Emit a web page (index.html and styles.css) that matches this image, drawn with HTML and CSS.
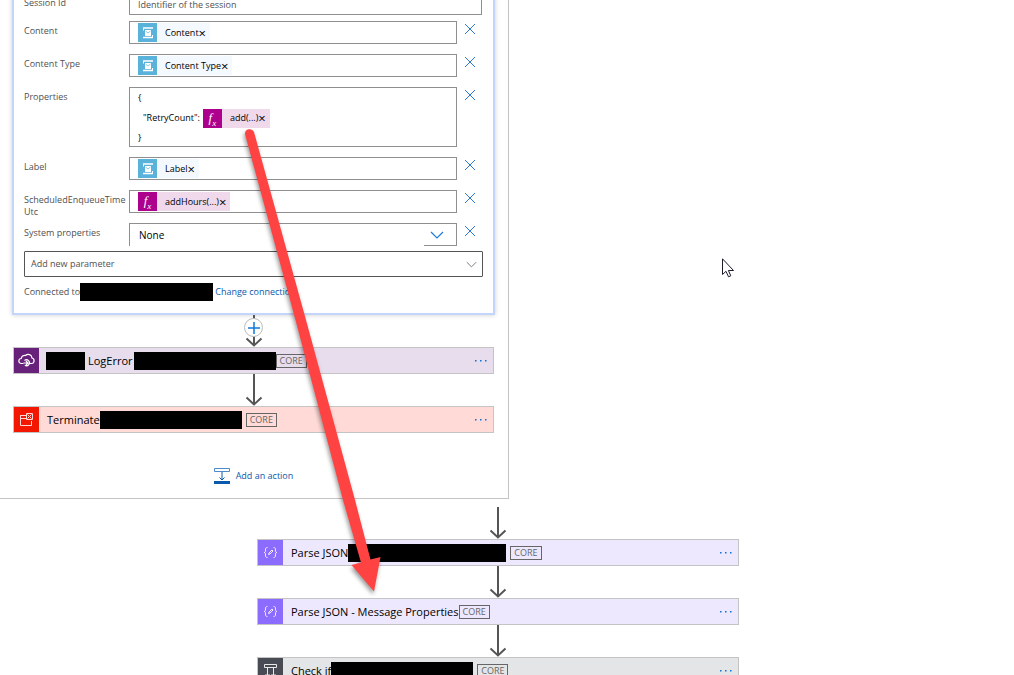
FILE: index.html
```html
<!DOCTYPE html>
<html lang="en">
<head>
    <meta charset="UTF-8">
    <meta name="viewport" content="width=device-width, initial-scale=1.0">
    <title>Logic App Designer</title>
    <link rel="stylesheet" href="styles.css">
</head>
<body>
    <!-- Shared icons -->
    <svg class="sprite" aria-hidden="true">
        <symbol id="icon-bus" viewBox="0 0 19 19">
            <path d="M5 5h10M5 14.500h10" fill="none" stroke="#fff" stroke-width="1.500"/>
            <path d="M5.500 5v2.500M14.500 14.500v-2.500" fill="none" stroke="#fff"/>
            <path d="M7 7h6v6h-6z" fill="#fff"/>
            <path d="M7.500 8l2.500 2 2.500-2" fill="none" stroke="#59b2d9" stroke-width=".7"/>
        </symbol>
        <symbol id="icon-close" viewBox="0 0 12 12">
            <path d="M1 1l10 10M11 1L1 11" fill="none" stroke="#2f78d0" stroke-width="1"/>
        </symbol>
        <symbol id="icon-chevron" viewBox="0 0 14 8">
            <path d="M1 1l6 6 6-6" fill="none" stroke="currentColor" stroke-width="1.200"/>
        </symbol>
        <symbol id="icon-arrow" viewBox="0 0 18 32">
            <path d="M9 0v30" fill="none" stroke="#555" stroke-width="2"/>
            <path d="M1.500 23.500l7.500 7 7.500-7" fill="none" stroke="#555" stroke-width="2"/>
        </symbol>
        <symbol id="icon-dots" viewBox="0 0 14 4">
            <path d="M1 1h1.500v1.500h-1.500zM6 1h1.500v1.500h-1.500zM11 1h1.500v1.500h-1.500z" fill="#0f6fd0"/>
        </symbol>
        <symbol id="icon-json" viewBox="0 0 25 25">
            <g fill="none" stroke="#f0eaff" stroke-width="1">
                <path d="M9.500 7.500c-2 0-2 .8-2 2.500s0 2.500-1.500 2.500c1.500 0 1.500.8 1.500 2.500s0 2.500 2 2.500M15.500 7.500c2 0 2 .8 2 2.500s0 2.500 1.500 2.500c-1.500 0-1.500.8-1.500 2.500s0 2.500-2 2.500"/>
                <path d="M10.500 14.500l.5-1.500 3-3 1 1-3 3z"/>
            </g>
        </symbol>
    </svg>

    <main class="canvas">
        <!-- Scope -->
        <section class="scope">
            <form class="panel">
                <div class="row">
                    <label class="row-label" for="session">Session Id</label>
                    <input class="field field-wide" id="session" type="text" value="Identifier of the session">
                </div>
                <div class="row">
                    <span class="row-label" id="lbl-content">Content</span>
                    <div class="field" role="textbox" aria-labelledby="lbl-content">
                        <span class="token"><svg class="token-icon"><use href="#icon-bus"/></svg>Content<button type="button" class="token-remove" aria-label="Remove Content">×</button></span>
                    </div>
                    <button type="button" class="row-remove" aria-label="Delete"><svg><use href="#icon-close"/></svg></button>
                </div>
                <div class="row">
                    <span class="row-label" id="lbl-type">Content Type</span>
                    <div class="field" role="textbox" aria-labelledby="lbl-type">
                        <span class="token"><svg class="token-icon"><use href="#icon-bus"/></svg>Content Type<button type="button" class="token-remove" aria-label="Remove Content Type">×</button></span>
                    </div>
                    <button type="button" class="row-remove" aria-label="Delete"><svg><use href="#icon-close"/></svg></button>
                </div>
                <div class="row">
                    <span class="row-label" id="lbl-props">Properties</span>
                    <div class="field field-code" role="textbox" aria-labelledby="lbl-props">
                        <div class="code-line">{</div>
                        <div class="code-line code-indent">"RetryCount":
                            <span class="token token-fx"><span class="token-icon fx">f<sub>x</sub></span>add(...)<button type="button" class="token-remove" aria-label="Remove add">×</button></span>
                        </div>
                        <div class="code-line">}</div>
                    </div>
                    <button type="button" class="row-remove" aria-label="Delete"><svg><use href="#icon-close"/></svg></button>
                </div>
                <div class="row">
                    <span class="row-label" id="lbl-label">Label</span>
                    <div class="field" role="textbox" aria-labelledby="lbl-label">
                        <span class="token"><svg class="token-icon"><use href="#icon-bus"/></svg>Label<button type="button" class="token-remove" aria-label="Remove Label">×</button></span>
                    </div>
                    <button type="button" class="row-remove" aria-label="Delete"><svg><use href="#icon-close"/></svg></button>
                </div>
                <div class="row">
                    <span class="row-label" id="lbl-time">ScheduledEnqueueTime<br>Utc</span>
                    <div class="field" role="textbox" aria-labelledby="lbl-time">
                        <span class="token token-fx"><span class="token-icon fx">f<sub>x</sub></span>addHours(...)<button type="button" class="token-remove" aria-label="Remove addHours">×</button></span>
                    </div>
                    <button type="button" class="row-remove" aria-label="Delete"><svg><use href="#icon-close"/></svg></button>
                </div>
                <div class="row">
                    <label class="row-label" for="system">System properties</label>
                    <div class="select-box">
                        <select class="select" id="system"><option>None</option></select>
                        <span class="select-arrow"><svg><use href="#icon-chevron"/></svg></span>
                    </div>
                    <button type="button" class="row-remove" aria-label="Delete"><svg><use href="#icon-close"/></svg></button>
                </div>
                <div class="add-parameter">
                    <select aria-label="Add new parameter"><option>Add new parameter</option></select>
                    <svg><use href="#icon-chevron"/></svg>
                </div>
                <div class="connection">
                    <span>Connected to</span><span class="redacted redacted-m"></span><a href="#">Change connection.</a>
                </div>
            </form>

            <div class="connector">
                <svg class="arrow"><use href="#icon-arrow"/></svg>
                <button type="button" class="insert" aria-label="Insert a new step">
                    <svg viewBox="0 0 12 12"><path d="M6 0v12M0 6h12" stroke="#0f7ad8" stroke-width="1.500"/></svg>
                </button>
            </div>

            <article class="card card-connector">
                <span class="card-icon">
                    <svg viewBox="0 0 25 25" fill="none" stroke="#fff" stroke-width="1.200">
                        <path d="M9.500 15.500H7.500a2.500 2.500 0 0 1-.3-5 3.500 3.500 0 0 1 4.300-3 3.800 3.800 0 0 1 6.500 2.500 2.800 2.800 0 0 1-.5 5.500h-1.500"/>
                        <path d="M10.500 12.500a3 3 0 1 1 .3 4.800M9.500 15h4M12 13l2 2-2 2"/>
                    </svg>
                </span>
                <span class="redacted redacted-s"></span>
                <span class="card-title">LogError</span>
                <span class="redacted redacted-l"></span>
                <span class="tag">CORE</span>
                <button type="button" class="menu" aria-label="More"><svg><use href="#icon-dots"/></svg></button>
            </article>

            <div class="connector"><svg class="arrow"><use href="#icon-arrow"/></svg></div>

            <article class="card card-terminate">
                <span class="card-icon">
                    <svg viewBox="0 0 25 25" fill="none" stroke="#ffd9d5" stroke-width="1">
                        <path d="M12 8.500H6M6.500 8v10.500h11v-4.500M6.500 11.500h5.500"/>
                        <path d="M12.500 6.500h6v6h-6zM13.500 7.500l4 4M17.500 7.500l-4 4"/>
                    </svg>
                </span>
                <span class="card-title">Terminate</span>
                <span class="redacted redacted-l"></span>
                <span class="tag tag-spaced">CORE</span>
                <button type="button" class="menu" aria-label="More"><svg><use href="#icon-dots"/></svg></button>
            </article>

            <button type="button" class="add-action">
                <svg viewBox="0 0 16 16" fill="none" stroke="#0b59ac">
                    <path d="M.5.500h15v3h-15z" stroke="#4a8bc8"/>
                    <path d="M8 4v8M5.500 9.500L8 12l2.500-2.500"/>
                    <path d="M0 14.500h16" stroke-width="3"/>
                </svg>
                Add an action
            </button>
        </section>

        <!-- Main flow -->
        <section class="flow">
            <div class="connector"><svg class="arrow"><use href="#icon-arrow"/></svg></div>
            <article class="card card-data">
                <span class="card-icon"><svg><use href="#icon-json"/></svg></span>
                <span class="card-title">Parse JSON</span>
                <span class="redacted redacted-xl"></span>
                <span class="tag tag-spaced">CORE</span>
                <button type="button" class="menu" aria-label="More"><svg><use href="#icon-dots"/></svg></button>
            </article>
            <div class="connector"><svg class="arrow"><use href="#icon-arrow"/></svg></div>
            <article class="card card-data">
                <span class="card-icon"><svg><use href="#icon-json"/></svg></span>
                <span class="card-title">Parse JSON - Message Properties</span>
                <span class="tag">CORE</span>
                <button type="button" class="menu" aria-label="More"><svg><use href="#icon-dots"/></svg></button>
            </article>
            <div class="connector"><svg class="arrow"><use href="#icon-arrow"/></svg></div>
            <article class="card card-control">
                <span class="card-icon">
                    <svg viewBox="0 0 25 25" fill="none" stroke="#e8e8ea" stroke-width="1">
                        <path d="M6.500 6.500h12v3h-12zM9.500 10v8M15.500 10v8M7.500 16l2 2 2-2M13.500 16l2 2 2-2"/>
                    </svg>
                </span>
                <span class="card-title">Check if</span>
                <span class="redacted redacted-l"></span>
                <span class="tag tag-spaced">CORE</span>
                <button type="button" class="menu" aria-label="More"><svg><use href="#icon-dots"/></svg></button>
            </article>
        </section>

        <!-- Annotation arrow and pointer -->
        <svg class="annotation" viewBox="0 0 150 475" aria-hidden="true">
            <path d="M5 10A4.700 4.700 0 0 1 14 8L66 196 115 376 130.500 435.500 140.500 433 134 467.500 111.500 441 121 438.500 103 376 55.500 196Z" fill="#ff4343"/>
        </svg>
        <svg class="pointer" viewBox="0 0 13 20" aria-hidden="true">
            <path d="M.5.800v15.700l3.500-3.200 2.500 5.500 2.300-1-2.400-5.300h5.100z" fill="#fff" stroke="#1c1c2c"/>
        </svg>
    </main>
</body>
</html>
```
FILE: styles.css
```css
:root {
    --text: #000000;
    --text-label: #505050;
    --link: #0b59ac;
    --line: #8f8f8f;
    --line-light: #c4c4c4;
    --panel-border: #c3d5fb;
}

* {
    margin: 0;
    padding: 0;
    box-sizing: border-box;
}

body {
    font-family: 'Open Sans', 'Noto Sans', sans-serif;
    font-size: 9px;
    line-height: 12px;
    color: var(--text);
    background-color: #ffffff;
}

button, input, select {
    font: inherit;
    color: inherit;
    background: none;
    border: none;
}

button {
    cursor: pointer;
}

svg {
    display: block;
}

.sprite {
    position: absolute;
    width: 0;
    height: 0;
}

.canvas {
    position: relative;
    height: 100vh;
    overflow: hidden;
}

/* Scope */
.scope {
    max-width: 509px;
    margin-top: -20px;
    padding: 0 13px 13px 12px;
    border-right: 1px solid var(--line-light);
    border-bottom: 1px solid var(--line-light);
}

.panel {
    display: flex;
    flex-direction: column;
    gap: 10px;
    padding: 11px 10px 12px;
    border: 2px solid var(--panel-border);
    box-shadow: 0 0 5px rgba(0, 0, 0, 0.2);
}

.row {
    display: grid;
    grid-template-columns: 105px 1fr 26px;
    grid-template-rows: minmax(22px, auto);
    align-items: start;
}

.row:first-child {
    margin-bottom: -4px;
}

.row-label {
    /* a second line may hang into the gap below */
    margin-bottom: -5px;
    padding-top: 4px;
    color: var(--text-label);
}

.field {
    display: flex;
    align-items: center;
    height: 23px;
    padding-left: 8px;
    border: 1px solid var(--line);
}

.field-wide {
    grid-column: 2 / 4;
    height: 22px;
    margin-right: 1px;
    color: var(--text-label);
}

.field-code {
    display: block;
    height: 60px;
}

.code-line {
    display: flex;
    align-items: center;
    height: 20px;
}

.code-indent {
    gap: 3px;
    padding-left: 5px;
}

.token {
    display: inline-flex;
    align-items: center;
    height: 19px;
    padding-right: 4px;
    background-color: #f4f8ff;
}

.token-icon {
    width: 19px;
    height: 19px;
    margin-right: 8px;
    background-color: #59b2d9;
}

.token-fx {
    background-color: #f1d9ec;
}

.fx {
    background-color: #ad008c;
    color: #ffffff;
    font: italic 13px/17px 'Liberation Serif', serif;
    text-align: center;
}

.fx sub {
    font-size: 9px;
    line-height: 0;
}

.token-remove {
    font-size: 13px;
}

.row-remove {
    justify-self: center;
    padding-top: 2px;
}

.row-remove svg {
    width: 12px;
    height: 12px;
}

.select-box {
    position: relative;
    height: 23px;
    border: 1px solid var(--line);
    border-bottom: none;
}

.select {
    appearance: none;
    width: 100%;
    height: 22px;
    padding-left: 9px;
    font-size: 10px;
}

.select-arrow {
    position: absolute;
    right: 0;
    bottom: 0;
    width: 32px;
    padding: 0 0 6px 6px;
    border-bottom: 1px solid var(--line);
    color: #1f7bd6;
    pointer-events: none;
}

.select-arrow svg {
    width: 14px;
    height: 8px;
}

.add-parameter {
    position: relative;
    margin-top: -5px;
    border: 1px solid #555555;
    border-radius: 1px;
    color: var(--text-label);
}

.add-parameter select {
    display: block;
    appearance: none;
    width: 100%;
    height: 24px;
    padding-left: 6px;
}

.add-parameter svg {
    position: absolute;
    top: 9px;
    right: 5px;
    width: 11px;
    height: 7px;
    color: #777777;
    pointer-events: none;
}

.connection {
    display: flex;
    align-items: center;
    margin-top: -4px;
    color: var(--text-label);
}

.connection a {
    margin-left: 2px;
    color: var(--link);
    text-decoration: none;
}

/* Blacked out names */
.redacted {
    flex: none;
    height: 18px;
    background-color: #000000;
}

.redacted-s {
    width: 39px;
}

.redacted-m {
    width: 133px;
}

.redacted-l {
    width: 142px;
}

.redacted-xl {
    width: 158px;
}

/* Connectors */
.connector {
    position: relative;
    display: flex;
    justify-content: center;
    height: 32px;
}

.arrow {
    width: 18px;
    height: 32px;
}

.insert {
    position: absolute;
    top: 3px;
    display: flex;
    align-items: center;
    justify-content: center;
    width: 19px;
    height: 19px;
    border: 1px solid #bbbbbb;
    border-radius: 50%;
    background-color: #ffffff;
}

.insert svg {
    width: 12px;
    height: 12px;
    flex: none;
}

/* Action cards */
.card {
    display: flex;
    align-items: center;
    height: 27px;
    padding-right: 5px;
    border: 1px solid var(--line-light);
    font-size: 11px;
}

.scope .card {
    margin: 0 1px;
}

.card-icon {
    margin-right: 7px;
}

.card-icon svg {
    width: 25px;
    height: 25px;
}

.card-title {
    padding-left: 1px;
    white-space: nowrap;
}

.redacted + .card-title {
    padding: 0 1px 0 3px;
}

.card-connector {
    background-color: #e8ddec;
}

.card-connector .card-icon {
    background-color: #68217a;
}

.card-terminate {
    background-color: #ffdad7;
}

.card-terminate .card-icon {
    background-color: #f41700;
}

.card-data {
    background-color: #eee8ff;
}

.card-data .card-icon {
    background-color: #8c6cff;
}

.card-control {
    background-color: #e3e5e6;
}

.card-control .card-icon {
    background-color: #484b54;
}

.tag {
    padding: 0 3px;
    border: 1px solid #666666;
    font-size: 9px;
    color: #666666;
}

.tag-spaced {
    margin-left: 4px;
}

.menu {
    margin-left: auto;
}

.menu svg {
    width: 14px;
    height: 4px;
}

.add-action {
    display: flex;
    align-items: center;
    gap: 6px;
    margin: 34px auto 0;
    height: 18px;
    color: var(--link);
}

.add-action svg {
    width: 16px;
    height: 16px;
}

.flow {
    max-width: 482px;
    margin: 8px 0 0 257px;
}

/* Overlays */
.annotation {
    position: absolute;
    top: 124px;
    left: 240px;
    width: 150px;
    height: 475px;
    overflow: visible;
    filter: drop-shadow(-1px 3px 2px rgba(0, 0, 0, 0.4));
    pointer-events: none;
}

.pointer {
    position: absolute;
    top: 258px;
    left: 722px;
    width: 13px;
    height: 20px;
    pointer-events: none;
}
```
